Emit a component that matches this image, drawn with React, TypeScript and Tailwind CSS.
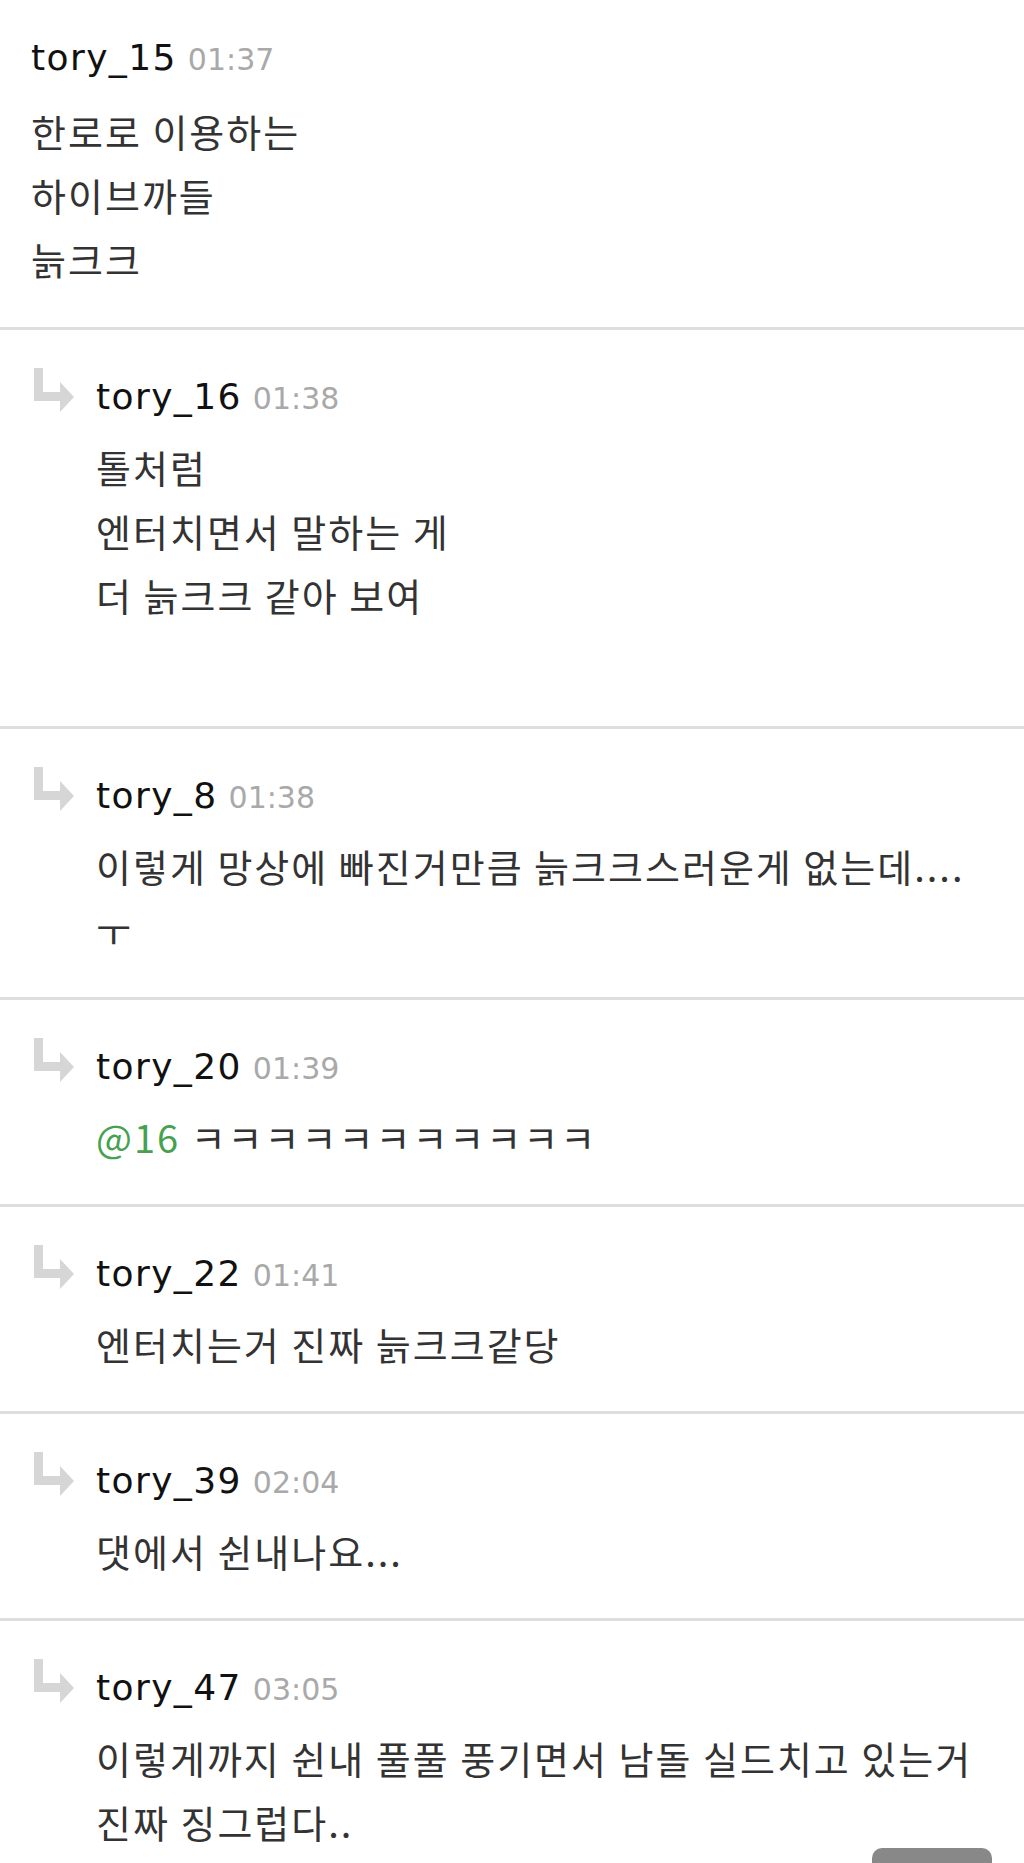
import React from "react"

type Comment = {
  id: number
  user: string
  time: string
  reply: boolean
  lines: React.ReactNode[]
}

const comments: Comment[] = [
  { id: 1, user: "tory_15", time: "01:37", reply: false, lines: ["한로로 이용하는", "하이브까들", "늙크크"] },
  { id: 2, user: "tory_16", time: "01:38", reply: true, lines: ["톨처럼", "엔터치면서 말하는 게", "더 늙크크 같아 보여", ""] },
  { id: 3, user: "tory_8", time: "01:38", reply: true, lines: ["이렇게 망상에 빠진거만큼 늙크크스러운게 없는데....", "ㅜ"] },
  {
    id: 4,
    user: "tory_20",
    time: "01:39",
    reply: true,
    lines: [
      <>
        <span className="text-[#45a24f]">@16</span> ㅋㅋㅋㅋㅋㅋㅋㅋㅋㅋㅋ
      </>,
    ],
  },
  { id: 5, user: "tory_22", time: "01:41", reply: true, lines: ["엔터치는거 진짜 늙크크같당"] },
  { id: 6, user: "tory_39", time: "02:04", reply: true, lines: ["댓에서 쉰내나요..."] },
  { id: 7, user: "tory_47", time: "03:05", reply: true, lines: ["이렇게까지 쉰내 풀풀 풍기면서 남돌 실드치고 있는거", "진짜 징그럽다.."] },
]

// reply arrow ↳
const ReplyArrow: React.FC = () => (
  <svg width="40" height="44" viewBox="0 0 40 44" className="mt-[-7px] shrink-0">
    <path d="M0 0 H9 V24 H26 V14 L40 29 L26 44 V33 H0 Z" fill="#d6d6d6" />
  </svg>
)

const CommentRow: React.FC<{ c: Comment; last: boolean }> = ({ c, last }) => (
  <div>
    <div className={c.reply ? "flex pl-[34px] pt-[45px] pb-[35px]" : "flex pl-[31px] pt-[36px] pb-[36px]"}>
      {c.reply && (
        <div className="w-[62px] shrink-0">
          <ReplyArrow />
        </div>
      )}
      <div className="flex flex-col">
        <div className="flex items-baseline gap-[11px] h-[44px] leading-[44px] font-['DejaVu_Sans',sans-serif]">
          <span className="text-[36px] text-[#111] tracking-[1.4px]">{c.user}</span>
          <span className="text-[30px] text-[#a9a9a9]">{c.time}</span>
        </div>
        <div
          className={`${c.reply ? "mt-[16px]" : "mt-[19px]"} text-[38px] tracking-[2px] leading-[64px] text-[#333] whitespace-nowrap font-['Noto_Sans_CJK_KR',sans-serif]`}
        >
          {c.lines.map((l, i) => (
            <div key={i} className="h-[64px]">
              {l}
            </div>
          ))}
        </div>
      </div>
    </div>
    {!last && <div className="h-[3px] bg-[#dedede]" />}
  </div>
)

export default function App() {
  return (
    <div className="relative w-full h-[1863px] overflow-hidden bg-white">
      {comments.map((c, i) => (
        <CommentRow key={c.id} c={c} last={i === comments.length - 1} />
      ))}
      {/* floating button peeking at the bottom */}
      <div className="absolute right-[32px] bottom-0 w-[120px] h-[15px] rounded-t-[10px] bg-[#888]" />
    </div>
  )
}
